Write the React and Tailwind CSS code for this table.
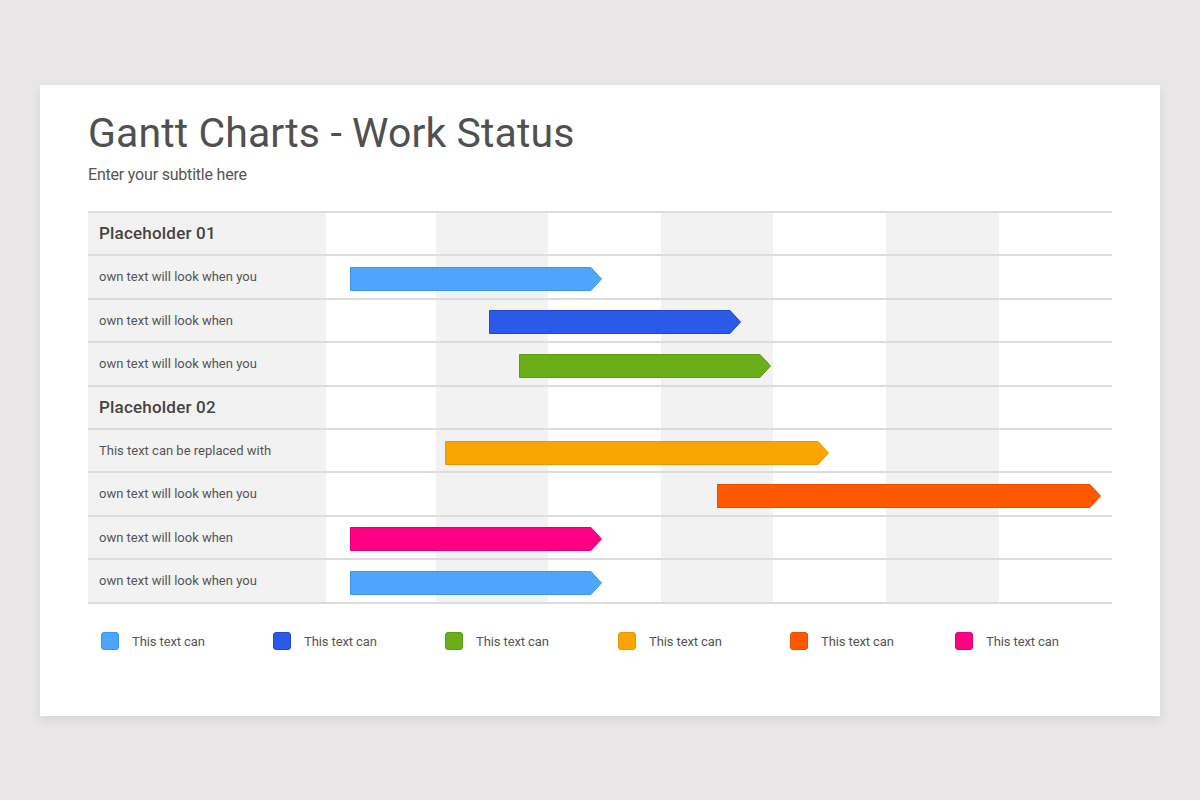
import React from 'react';

const COLORS = {
  sky: { fill: '#4da6fb', edge: '#3d95ea' },
  blue: { fill: '#2b5ae8', edge: '#1f49cf' },
  green: { fill: '#6aaf1a', edge: '#5c9c12' },
  amber: { fill: '#f9a500', edge: '#e79700' },
  orange: { fill: '#ff5800', edge: '#e84f00' },
  pink: { fill: '#ff0083', edge: '#e60075' },
};

const rows = [
  { heading: 'Placeholder 01' },
  { label: 'own text will look when you', bar: { left: 24, width: 252, color: 'sky' } },
  { label: 'own text will look when', bar: { left: 163, width: 252, color: 'blue' } },
  { label: 'own text will look when you', bar: { left: 193, width: 252, color: 'green' } },
  { heading: 'Placeholder 02' },
  { label: 'This text can be replaced with', bar: { left: 119, width: 384, color: 'amber' } },
  { label: 'own text will look when you', bar: { left: 391, width: 384, color: 'orange' } },
  { label: 'own text will look when', bar: { left: 24, width: 252, color: 'pink' } },
  { label: 'own text will look when you', bar: { left: 24, width: 252, color: 'sky' } },
];

// legend slot widths, read off the slide
const legend = [
  { color: 'sky', w: 172 },
  { color: 'blue', w: 172 },
  { color: 'green', w: 173 },
  { color: 'amber', w: 172 },
  { color: 'orange', w: 165 },
  { color: 'pink', w: 160 },
];

const Bar = ({ left, width, color }) => {
  const h = 24;
  const tip = 11;
  const c = COLORS[color];
  const pts = `0.5,0.5 ${width - tip},0.5 ${width - 0.5},${h / 2} ${width - tip},${h - 0.5} 0.5,${h - 0.5}`;
  return (
    <svg
      className="absolute top-[calc(50%+2px)] -translate-y-1/2"
      style={{ left, width }}
      width={width}
      height={h}
      viewBox={`0 0 ${width} ${h}`}
    >
      <polygon points={pts} fill={c.fill} stroke={c.edge} strokeWidth="1" />
    </svg>
  );
};

const Stripes = () => (
  <div className="grid grid-cols-[110px_112px_113px_112px_113px_113px_1fr] h-full">
    {[0, 1, 2, 3, 4, 5, 6].map((i) => (
      <div key={i} className={i % 2 === 1 ? 'bg-[#f2f2f2]' : 'bg-white'} />
    ))}
  </div>
);

const App = () => {
  return (
    <div className="w-[1200px] h-[800px] bg-[#e8e6e7] pt-[85px] px-10 font-['Roboto',sans-serif]">
      <div className="h-[631px] bg-white shadow-[0_4px_10px_rgba(0,0,0,0.08)] pl-12 pr-12 pt-[23px]">
        <h1 className="text-[41px] font-normal tracking-[0.1px] text-[#505050] leading-[50px]">
          Gantt Charts - Work Status
        </h1>
        <p className="mt-[7px] text-[16px] text-[#555] leading-5 tracking-[-0.2px]">Enter your subtitle here</p>

        <div className="mt-[26px] border-t-2 border-[#dcdcdc]">
          {rows.map((row, i) => (
            <div key={i} className="flex h-[43.4px] border-b-2 border-[#dcdcdc]">
              <div className="w-[238px] shrink-0 bg-[#f2f2f2] flex items-center px-[11px]">
                {row.heading ? (
                  <span className="text-[17px] font-medium text-[#444] tracking-[0.2px]">{row.heading}</span>
                ) : (
                  <span className="text-[13px] text-[#555]">{row.label}</span>
                )}
              </div>
              <div className="relative flex-1">
                <Stripes />
                {row.bar && <Bar {...row.bar} />}
              </div>
            </div>
          ))}
        </div>

        <div className="flex mt-[28px] pl-[13px]">
          {legend.map((item) => (
            <div key={item.color} className="flex shrink-0 items-center gap-[13px]" style={{ width: item.w }}>
              <span
                className="w-[18px] h-[18px] rounded-[3px] border"
                style={{ background: COLORS[item.color].fill, borderColor: COLORS[item.color].edge }}
              />
              <span className="text-[13px] text-[#555] tracking-[-0.1px]">This text can</span>
            </div>
          ))}
        </div>
      </div>
    </div>
  );
};

export default App;
